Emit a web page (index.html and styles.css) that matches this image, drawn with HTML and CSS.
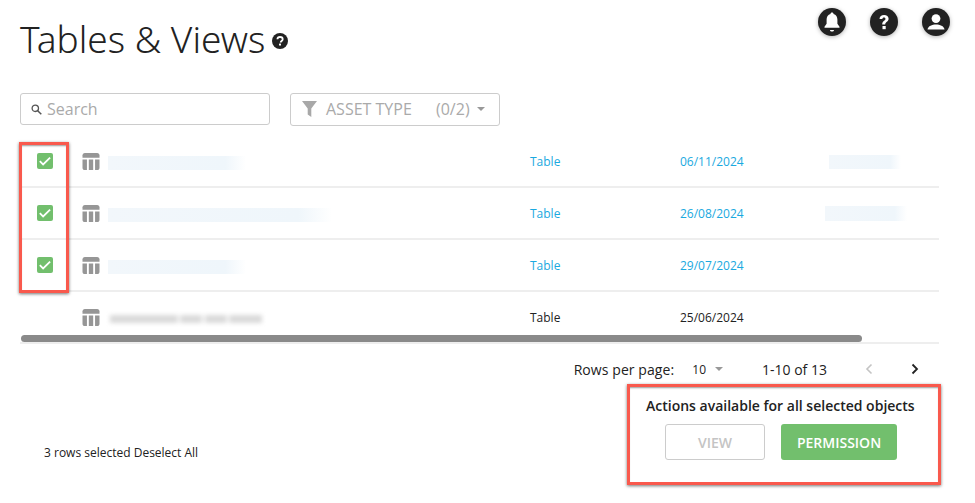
FILE: index.html
```html
<!DOCTYPE html>
<html>
	<head>
		<meta charset="utf-8">
		<title>Tables &amp; Views</title>
		<link rel="stylesheet" href="styles.css">
	</head>
	<body>
		<svg class="defs" width="0" height="0">
			<symbol id="tbl" viewBox="0 0 18 18">
				<path d="M0 5V2.5C0 1 1 0 2.5 0h13C17 0 18 1 18 2.5V5z" fill="#969696"/>
				<path d="M0 7h4.7v11H2.5C1 18 0 17 0 15.500z M6.7 7h4.6v11H6.700z M13.3 7H18v8.500c0 1.500-1 2.500-2.500 2.500h-2.200z" fill="#969696"/>
			</symbol>
			<symbol id="chk" viewBox="0 0 16 16">
				<rect width="16" height="16" rx="2" fill="#72bf6d"/>
				<path d="M2.800 8.200l3.300 3.200 7-6.800" fill="none" stroke="#fff" stroke-width="1.800"/>
			</symbol>
		</svg>

		<header class="top">
			<div class="title">
				<h1>Tables &amp; Views</h1>
				<svg class="title-help" viewBox="0 0 16 16">
					<circle cx="8" cy="8" r="8" fill="#222"/>
					<path d="M5.400 6.200C5.500 4.700 6.600 4 8 4c1.500 0 2.700.8 2.700 2.200 0 1.700-2 1.800-2 3.200" fill="none" stroke="#fff" stroke-width="1.800"/>
					<rect x="7" y="10.600" width="2" height="1.900" fill="#fff"/>
				</svg>
			</div>
			<div class="top-icons">
				<svg class="round-icon" viewBox="0 0 28 28">
					<circle cx="14" cy="14" r="14" fill="#222"/>
					<path d="M14 4.500c1 0 1.500.6 1.500 1.400 2.600.7 3.900 2.900 3.900 5.600v4.300l2.100 3v1H6.500v-1l2.100-3v-4.300c0-2.700 1.300-4.900 3.900-5.600 0-.8.500-1.400 1.500-1.400z" fill="#fff"/>
					<path d="M12 22h4c0 1-.9 1.600-2 1.600s-2-.6-2-1.600z" fill="#fff"/>
				</svg>
				<svg class="round-icon" viewBox="0 0 28 28">
					<circle cx="14" cy="14" r="14" fill="#222"/>
					<path d="M9.500 11c.1-2.700 2-4 4.600-4 2.600 0 4.500 1.400 4.500 3.700 0 3-3.400 3-3.400 5.800h-3c0-3.700 3.300-3.800 3.300-5.500 0-.9-.6-1.500-1.500-1.500-1 0-1.600.6-1.700 1.500z" fill="#fff"/>
					<rect x="12.500" y="18" width="3.200" height="3.200" fill="#fff"/>
				</svg>
				<svg class="round-icon" viewBox="0 0 28 28">
					<circle cx="14" cy="14" r="14" fill="#222"/>
					<circle cx="14" cy="10.600" r="4.400" fill="#fff"/>
					<path d="M5.500 21.500c.6-3.400 4.600-4.900 8.500-4.900s7.900 1.500 8.500 4.900z" fill="#fff"/>
				</svg>
			</div>
		</header>

		<div class="filters">
			<div class="search">
				<svg class="search-ico" viewBox="0 0 11 11">
					<circle cx="4.300" cy="4.300" r="3.200" fill="none" stroke="#555" stroke-width="1.300"/>
					<path d="M6.700 6.700l3.600 3.600" stroke="#555" stroke-width="1.500"/>
				</svg>
				<span>Search</span>
			</div>
			<div class="asset">
				<svg class="funnel" viewBox="0 0 15 16">
					<path d="M0 0h15L9.300 7.500V16L5.700 13.600V7.500z" fill="#a8a8a8"/>
				</svg>
				<span class="asset-name">ASSET TYPE</span>
				<span class="asset-count">(0/2)</span>
				<i class="caret"></i>
			</div>
		</div>

		<div class="table">
			<div class="row linked">
				<svg class="chk"><use href="#chk"/></svg>
				<svg class="tbl"><use href="#tbl"/></svg>
				<div><div class="smear w138"></div></div>
				<span>Table</span>
				<span>06/11/2024</span>
				<div><div class="smear w72"></div></div>
			</div>
			<div class="row linked">
				<svg class="chk"><use href="#chk"/></svg>
				<svg class="tbl"><use href="#tbl"/></svg>
				<div><div class="smear w224"></div></div>
				<span>Table</span>
				<span>26/08/2024</span>
				<div><div class="smear w82"></div></div>
			</div>
			<div class="row linked">
				<svg class="chk"><use href="#chk"/></svg>
				<svg class="tbl"><use href="#tbl"/></svg>
				<div><div class="smear w138"></div></div>
				<span>Table</span>
				<span>29/07/2024</span>
				<div></div>
			</div>
			<div class="row">
				<svg class="chk"></svg>
				<svg class="tbl"><use href="#tbl"/></svg>
				<div><div class="smudge"></div></div>
				<span>Table</span>
				<span>25/06/2024</span>
				<div></div>
			</div>
			<div class="scrollbar"></div>
			<div class="mark-checks"></div>
		</div>

		<div class="pager">
			<span class="per-label">Rows per page:</span>
			<span class="per-page">10</span>
			<i class="caret"></i>
			<span class="range">1-10 of 13</span>
			<svg class="arrow" viewBox="0 0 8 12"><path d="M6.500 1.500L2 6l4.500 4.500" fill="none" stroke="#c4c4c4" stroke-width="1.600"/></svg>
			<svg class="arrow next" viewBox="0 0 8 12"><path d="M1.500 1.500L6 6l-4.500 4.500" fill="none" stroke="#222" stroke-width="1.800"/></svg>
		</div>

		<div class="bottom">
			<div class="selected">3 rows selected Deselect All</div>
			<div class="actions">
				<div class="actions-title">Actions available for all selected objects</div>
				<div class="actions-btns">
					<button class="btn btn-off">VIEW</button>
					<button class="btn btn-on">PERMISSION</button>
				</div>
			</div>
		</div>
	</body>
</html>
```

FILE: styles.css
```css
*{margin: 0; padding: 0; box-sizing: border-box;}
html,body{height: 503px; overflow: hidden;}
body{background: #fff; color: #222; font-family: "Open Sans", "Noto Sans", sans-serif; font-size: 12px;}
.defs{display: block; height: 0;}
i{display: block;}

.top{display: flex; justify-content: space-between; height: 92px; padding: 8px 25px 0 20px;}
.title{display: flex; align-items: center; height: 60px;}
.title h1{font-size: 37px; font-weight: 300; font-family: "Noto Sans", sans-serif; letter-spacing: 0; color: #222;}
.title-help{width: 16px; height: 16px; margin: 6px 0 0 7px;}
.top-icons{display: flex; gap: 24px; height: 28px;}
.round-icon{width: 28px; height: 28px; filter: drop-shadow(0 1px 2px rgba(0,0,0,.3));}

.filters{display: flex; align-items: center; gap: 20px; padding-left: 20px; height: 34px; font-size: 16px; color: #aaa;}
.search{display: flex; align-items: center; width: 250px; height: 32px; padding-left: 10px; border: 1px solid #ccc; border-radius: 3px;}
.search-ico{width: 11px; height: 11px; margin-right: 5px;}
.asset{display: flex; align-items: center; width: 210px; height: 33px; padding-left: 11px; border: 1px solid #ccc; border-radius: 3px;}
.funnel{width: 15px; height: 16px; margin-right: 9px;}
.asset-name{width: 110px;}
.asset-count{width: 41px;}
.caret{width: 0; height: 0; border: 4.500px solid transparent; border-top: 4.500px solid #999; border-bottom: 0;}

.table{position: relative; width: 919px; margin: 10px 0 0 20px;}
.row{display: grid; grid-template-columns: 17px 45px 18px 8px 422px 150px 150px 1fr; height: 52px; align-items: center; border-bottom: 2px solid #eee;}
.row > svg{display: block;}
.chk{grid-column: 1; width: 16px; height: 16px; margin-left: 17px;}
.tbl{grid-column: 3; width: 18px; height: 17px; margin-top: 1px;}
.row > div:nth-of-type(1){grid-column: 5;}
.row > span, .row > div{padding-top: 1px;}
.linked > span{color: #1aa9e0;}
.smear{height: 14px; margin-top: 3px; background: linear-gradient(90deg, #f2f7fb, #eff6fb 85%, #fff);}
.w138{width: 138px;}
.w224{width: 224px;}
.w72{width: 72px; margin-top: 1px; margin-left: -1px;}
.w82{width: 82px; height: 15px; margin-top: -1px; margin-left: -5px;}
.smudge{width: 152px; height: 8px; margin: 2px 0 0 2px; background: linear-gradient(90deg, #dadada 0 44%, #f0f0f0 44% 47%, #dadada 47% 60%, #f0f0f0 60% 63%, #dadada 63% 76%, #f0f0f0 76% 79%, #dadada 79%); filter: blur(2px);}
.scrollbar{position: absolute; left: 1px; bottom: 2px; width: 841px; height: 7px; border-radius: 4px; background: #8a8a8a;}
.mark-checks{position: absolute; left: -1px; top: 6px; width: 50px; height: 151px; border: 3px solid #f9594d; box-shadow: 0 1px 3px rgba(0,0,0,.55), inset 0 2px 2px -1px rgba(0,0,0,.4);}

.pager{display: flex; align-items: center; justify-content: flex-end; height: 40px; margin-top: 5px; padding-right: 56px; font-size: 14px; color: #222;}
.per-label{letter-spacing: .08px;}
.per-page{margin-left: 18px; font-size: 12px;}
.pager .caret{margin: 0 0 0 9px;}
.range{margin-left: 39px; width: 100px;}
.arrow{width: 8px; height: 12px; margin-left: 3px;}
.arrow.next{margin-left: 38px;}

.bottom{display: flex; justify-content: space-between; padding: 0 34px 0 44px; height: 101px; margin-top: -5px;}
.selected{margin-top: 60px; font-size: 12px;}
.actions{width: 314px; height: 101px; padding: 10px 0 0 16px; border: 3px solid #f9594d; box-shadow: 0 1px 3px rgba(0,0,0,.55), inset 0 2px 2px -1px rgba(0,0,0,.4);}
.actions-title{font-size: 14px; font-weight: 600; line-height: 18px; white-space: nowrap;}
.actions-btns{display: flex; gap: 16px; margin: 9px 0 0 19px;}
.btn{height: 36px; border-radius: 3px; font: 600 14px "Open Sans", sans-serif;}
.btn-off{width: 100px; background: #fff; border: 1px solid #ccc; color: #c4c4c4;}
.btn-on{width: 116px; background: #72bf6d; border: 0; color: #fff;}
```
